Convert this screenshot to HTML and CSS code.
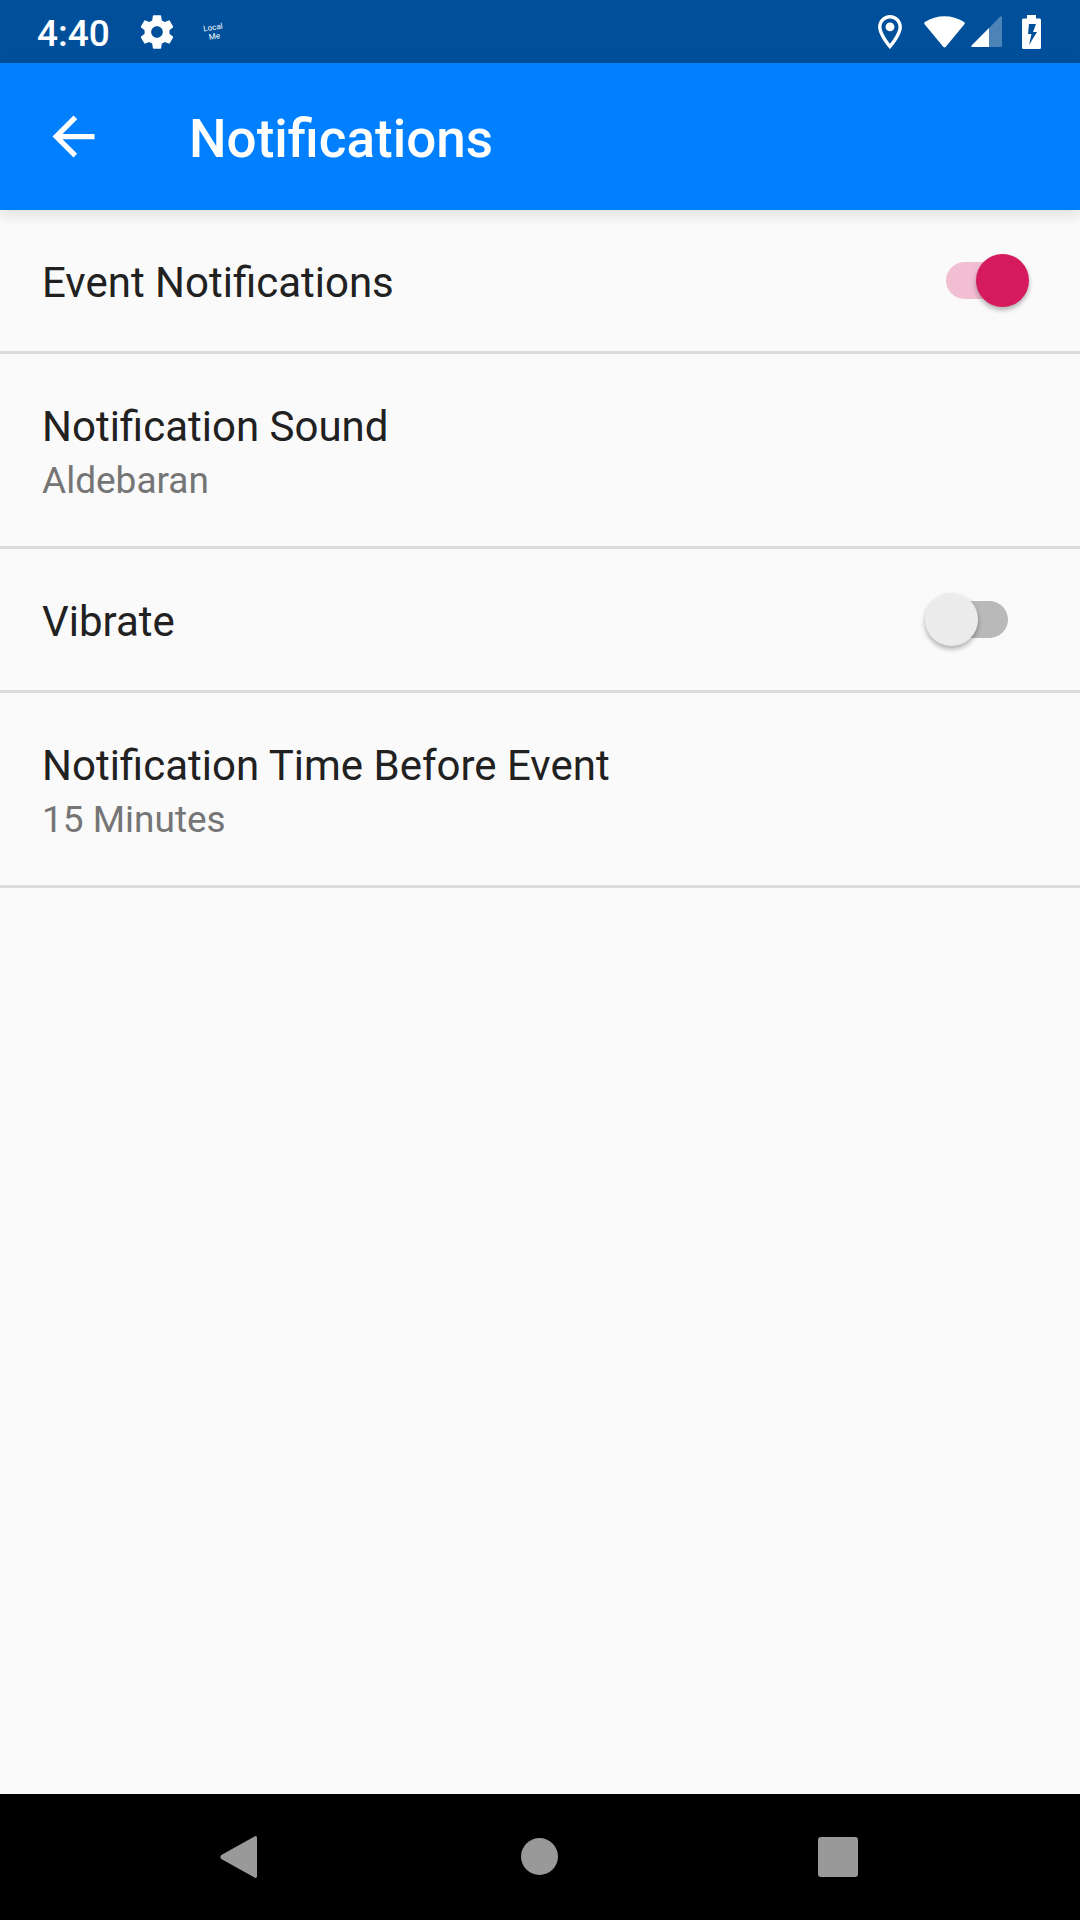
FILE: index.html
```html
<!DOCTYPE html>
<html lang="en">
<head>
<meta charset="utf-8">
<meta name="viewport" content="width=device-width, initial-scale=1">
<title>Notifications</title>
<link rel="stylesheet" href="styles.css">
</head>
<body>
<div class="status-bar">
  <div class="status-group">
    <time class="clock">4:40</time>
    <svg class="gear" viewBox="0 0 24 24" width="40" height="40" aria-hidden="true"><path d="M19.43 12.98c.04-.32.07-.64.07-.98s-.03-.66-.07-.98l2.11-1.65c.19-.15.24-.42.12-.64l-2-3.46c-.12-.22-.39-.3-.61-.22l-2.49 1c-.52-.4-1.08-.73-1.69-.98l-.38-2.65C14.46 2.18 14.25 2 14 2h-4c-.25 0-.46.18-.49.42l-.38 2.65c-.61.25-1.17.59-1.69.98l-2.49-1c-.23-.09-.49 0-.61.22l-2 3.46c-.13.22-.07.49.12.64l2.11 1.65c-.04.32-.07.65-.07.98s.03.66.07.98l-2.11 1.65c-.19.15-.24.42-.12.64l2 3.46c.12.22.39.3.61.22l2.49-1c.52.4 1.08.73 1.69.98l.38 2.65c.03.24.24.42.49.42h4c.25 0 .46-.18.49-.42l.38-2.65c.61-.25 1.17-.59 1.69-.98l2.49 1c.23.09.49 0 .61-.22l2-3.46c.12-.22.07-.49-.12-.64l-2.11-1.65zM12 15.5c-1.930 0-3.500-1.570-3.500-3.500s1.570-3.500 3.500-3.500 3.500 1.570 3.500 3.500-1.570 3.500-3.500 3.500z"/></svg>
    <span class="app-mark"><span>Local</span><span>Me</span></span>
  </div>
  <div class="status-group">
    <svg class="place" viewBox="4 2 16 20" width="28" height="34" aria-hidden="true"><path d="M12 2C8.130 2 5 5.130 5 9c0 5.250 7 13 7 13s7-7.750 7-13c0-3.870-3.130-7-7-7zM7 9c0-2.760 2.240-5 5-5s5 2.240 5 5c0 2.880-2.880 7.190-5 9.880C9.920 16.210 7 11.850 7 9z"/><circle cx="12" cy="9" r="2.600"/></svg>
    <svg class="wifi" viewBox="0 0 41 32" width="41" height="32" aria-hidden="true"><path d="M.6 8.200Q-.4 7 .9 6Q10 .3 20.500.3T40.100 6Q41.400 7 40.400 8.200L22 30.600Q20.500 32.300 19 30.600z"/></svg>
    <svg class="signal" viewBox="0 0 31 31" width="31" height="31" aria-hidden="true"><path opacity=".3" d="M18 12 29 .8Q31-.8 31 1.500V29.500Q31 31 29.500 31H18z"/><path d="M18 12V31H1.500Q-.6 31 .8 29.200z"/></svg>
    <svg class="battery" viewBox="0 0 19 34" width="19" height="34" aria-hidden="true"><path fill-rule="evenodd" d="M5 0h9v3.500h3.500Q19 3.500 19 5v27.500q0 1.500-1.500 1.500h-16Q0 34 0 32.500V5q0-1.500 1.500-1.500H5zM7 9 6 19h3.500L7 30 15 17h-4l3-8z"/></svg>
  </div>
</div>

<header class="app-bar">
  <button class="back" type="button" aria-label="Back">
    <svg viewBox="0 0 24 24" width="63" height="63" aria-hidden="true"><path d="M20 11H7.830l5.590-5.590L12 4l-8 8 8 8 1.410-1.410L7.830 13H20z"/></svg>
  </button>
  <h1 class="title">Notifications</h1>
</header>

<main class="content">
  <ul class="settings">
    <li>
      <label class="row">
        <span class="name">Event Notifications</span>
        <input class="switch" type="checkbox" role="switch" checked>
      </label>
    </li>
    <li>
      <button class="row" type="button">
        <span class="text"><span class="name">Notification Sound</span><span class="summary">Aldebaran</span></span>
      </button>
    </li>
    <li>
      <label class="row">
        <span class="name">Vibrate</span>
        <input class="switch" type="checkbox" role="switch">
      </label>
    </li>
    <li>
      <button class="row" type="button">
        <span class="text"><span class="name">Notification Time Before Event</span><span class="summary">15 Minutes</span></span>
      </button>
    </li>
  </ul>
</main>

<nav class="nav-bar" aria-label="System">
  <button type="button" aria-label="Back"><svg viewBox="0 0 42 42" width="42" height="42" aria-hidden="true"><path d="M2.300 19 35.500.4Q38-.6 38 2V40Q38 42.600 35.500 41.600L2.300 23Q.3 21 2.300 19z"/></svg></button>
  <button type="button" aria-label="Home"><svg viewBox="0 0 42 42" width="42" height="42" aria-hidden="true"><circle cx="20.500" cy="20.500" r="18.500"/></svg></button>
  <button type="button" aria-label="Recent apps"><svg viewBox="1 0 42 42" width="42" height="42" aria-hidden="true"><rect x="0" y="1" width="40" height="40" rx="3"/></svg></button>
</nav>
</body>
</html>
```
FILE: styles.css
```css
* {
  box-sizing: border-box;
}

body {
  margin: 0;
  min-height: 100vh;
  display: flex;
  flex-direction: column;
  background: #fafafa;
  color: #212121;
  font-family: Roboto, "Liberation Sans", sans-serif;
}

button {
  margin: 0;
  padding: 0;
  border: 0;
  background: none;
  color: inherit;
  font: inherit;
  text-align: left;
  cursor: pointer;
}

svg {
  display: block;
  overflow: visible;
  fill: currentColor;
}

/* Status bar */
.status-bar {
  display: flex;
  justify-content: space-between;
  height: 63px;
  padding: 0 39px 0 37px;
  background: #004f9a;
  color: #fff;
}

.status-group {
  display: flex;
  align-items: center;
}

.clock {
  padding-top: 3px;
  font-size: 37px;
  line-height: 43px;
  font-weight: 500;
}

.gear {
  margin-left: 27px;
}

.app-mark {
  display: flex;
  flex-direction: column;
  align-items: center;
  margin-left: 27px;
  font-size: 8px;
  line-height: 9px;
  transform: rotate(-9deg);
}

.wifi {
  margin-left: 20px;
}

.signal {
  margin-left: 6px;
}

.battery {
  margin-left: 20px;
}

/* App bar */
.app-bar {
  position: relative;
  display: flex;
  align-items: center;
  gap: 84px;
  height: 147px;
  padding: 0 42px;
  background: #0080ff;
  color: #fff;
  box-shadow: 0 4px 14px rgba(0, 0, 0, 0.12);
}

.title {
  margin: 0;
  padding-top: 4px;
  font-size: 53px;
  line-height: 62px;
  font-weight: 500;
}

/* Settings list */
.content {
  flex: 1;
}

.settings {
  margin: 0;
  padding: 0;
  list-style: none;
}

.settings li {
  border-bottom: 3px solid #dbdbdb;
}

.row {
  display: flex;
  align-items: center;
  justify-content: space-between;
  width: 100%;
  padding: 44px 51px 44px 42px;
  cursor: pointer;
}

.name {
  padding-top: 4px;
  font-size: 42px;
  line-height: 49px;
}

.text {
  display: flex;
  flex-direction: column;
  gap: 8px;
}

.summary {
  color: #757575;
  font-size: 37px;
  line-height: 43px;
}

.switch {
  appearance: none;
  display: flex;
  align-items: center;
  width: 104px;
  height: 53px;
  margin: 0;
  cursor: pointer;
}

/* Rounded track, centred behind the thumb's travel */
.switch::before {
  content: "";
  flex: none;
  width: 62px;
  height: 37px;
  margin: 0 21px;
  border-radius: 19px;
  background: #b9b9b9;
}

/* Thumb, pulled back over the track */
.switch::after {
  content: "";
  flex: none;
  width: 53px;
  height: 53px;
  margin-left: -104px;
  border-radius: 50%;
  background: #ececec;
  box-shadow: 0 3px 5px rgba(0, 0, 0, 0.3);
}

.switch:checked::before {
  background: #f2bfd2;
}

.switch:checked::after {
  margin-left: -53px;
  background: #d51a5e;
}

/* System navigation */
.nav-bar {
  display: grid;
  grid-template-columns: repeat(3, 1fr);
  height: 126px;
  padding: 0 90px;
  background: #000;
  color: #999;
}

.nav-bar button {
  display: grid;
  place-items: center;
}
```
